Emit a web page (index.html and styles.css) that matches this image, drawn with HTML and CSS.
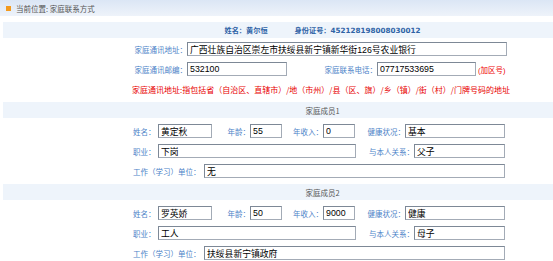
FILE: index.html
```html
<!DOCTYPE html>
<html lang="zh-CN">
<head>
<meta charset="UTF-8" />
<title>家庭联系方式</title>
<link rel="stylesheet" href="styles.css">
</head>
<body>
  <div class="crumb"><span class="dot"></span>当前位置: 家庭联系方式</div>

  <div class="band head">
    <span>姓名：黄尔恒</span>
    <span>身份证号：452128198008030012</span>
  </div>

  <div class="form">
    <div class="row">
      <span class="lbl w55">家庭通讯地址：</span>
      <input class="box w320" type="text" value="广西壮族自治区崇左市扶绥县新宁镇新华街126号农业银行">
    </div>
    <div class="row">
      <span class="lbl w55">家庭通讯邮编：</span>
      <input class="box w100" type="text" value="532100">
      <span class="lbl w90">家庭联系电话：</span>
      <input class="box w99" type="text" value="07717533695">
      <span class="hint">(加区号)</span>
    </div>
    <div class="note">家庭通讯地址:指包括省（自治区、直辖市）/地（市州）/县（区、旗）/乡（镇）/街（村）/门牌号码的地址</div>
  </div>

  <div class="band"><span>家庭成员1</span></div>

  <div class="form member">
    <div class="row">
      <span class="lbl first w25">姓名：</span>
      <input class="box w54" type="text" value="黄定秋">
      <span class="lbl w38">年龄：</span>
      <input class="box w32" type="text" value="55">
      <span class="lbl w41">年收入：</span>
      <input class="box w32" type="text" value="0">
      <span class="lbl w50">健康状况：</span>
      <input class="box w100" type="text" value="基本">
    </div>
    <div class="row">
      <span class="lbl first w25">职业：</span>
      <input class="box w198" type="text" value="下岗">
      <span class="lbl w58">与本人关系：</span>
      <input class="box w91" type="text" value="父子">
    </div>
    <div class="row">
      <span class="lbl first w71">工作（学习）单位：</span>
      <input class="box w301" type="text" value="无">
    </div>
  </div>

  <div class="band"><span>家庭成员2</span></div>

  <div class="form member">
    <div class="row">
      <span class="lbl first w25">姓名：</span>
      <input class="box w54" type="text" value="罗英娇">
      <span class="lbl w38">年龄：</span>
      <input class="box w32" type="text" value="50">
      <span class="lbl w41">年收入：</span>
      <input class="box w32" type="text" value="9000">
      <span class="lbl w50">健康状况：</span>
      <input class="box w100" type="text" value="健康">
    </div>
    <div class="row">
      <span class="lbl first w25">职业：</span>
      <input class="box w198" type="text" value="工人">
      <span class="lbl w58">与本人关系：</span>
      <input class="box w91" type="text" value="母子">
    </div>
    <div class="row">
      <span class="lbl first w71">工作（学习）单位：</span>
      <input class="box w301" type="text" value="扶绥县新宁镇政府">
    </div>
  </div>
</body>
</html>
```

FILE: styles.css
```css
body {
  margin: 0;
  background: #fff;
  font-family: "DejaVu Sans", "Noto Sans CJK SC", sans-serif;
  font-size: 7.5px;
  color: #555;
}

/* breadcrumb bar */
.crumb {
  height: 16px;
  display: flex;
  align-items: center;
  padding-left: 6px;
  background: linear-gradient(#dbe6f5, #eef3fa);
  color: #555;
  font-family: "Noto Sans CJK SC", sans-serif;
}
.dot {
  width: 5px;
  height: 5px;
  background: #f39a1e;
  margin-right: 5px;
}

/* light blue section bands */
.band {
  margin: 3px 0 3px 3px;
  height: 16px;
  background: #eef4fb;
  display: flex;
  align-items: center;
  justify-content: center;
  padding-left: 132px;
  width: 375px;
  box-sizing: content-box;
  padding-right: 43px;
  font-family: "Noto Sans CJK SC", sans-serif;
  color: #555;
}
.band.head {
  margin-top: 6px;
  margin-bottom: 1px;
  gap: 27px;
  font-family: "DejaVu Sans", "Noto Sans CJK SC", sans-serif;
  font-size: 7.2px;
  font-weight: bold;
  color: #2f63a6;
}

.form {
  padding-left: 132px;
}
.form.member {
  padding-left: 133px;
}
.row {
  height: 20px;
  display: flex;
  align-items: center;
}
.lbl {
  flex: none;
  text-align: right;
  color: #4d83c8;
  font-family: "Noto Sans CJK SC", sans-serif;
  white-space: nowrap;
}
.lbl.first {
  text-align: left;
}
.box {
  flex: none;
  height: 14px;
  box-sizing: border-box;
  margin: 0;
  padding: 0 2px;
  border: 1px solid #a3abb6;
  border-top-color: #7d8896;
  border-left-color: #7d8896;
  background: #fff;
  color: #000;
  font-family: "Liberation Sans", "Noto Sans CJK SC", sans-serif;
  font-size: 8.8px;
  outline: none;
}
.hint {
  margin-left: 2px;
  color: #e00;
  font-family: "Liberation Sans", "Noto Sans CJK SC", sans-serif;
  font-size: 7.5px;
}
.note {
  height: 20px;
  display: flex;
  align-items: center;
  color: #e80000;
  font-family: "Noto Sans CJK SC", sans-serif;
  font-size: 8px;
  white-space: nowrap;
}

.w25 { width: 25px; }
.w32 { width: 32px; }
.w38 { width: 38px; }
.w41 { width: 41px; }
.w50 { width: 50px; }
.w54 { width: 54px; }
.w55 { width: 55px; }
.w58 { width: 58px; }
.w71 { width: 71px; }
.w90 { width: 90px; }
.w91 { width: 91px; }
.w99 { width: 99px; }
.w100 { width: 100px; }
.w198 { width: 198px; }
.w301 { width: 301px; }
.w320 { width: 320px; }
```
